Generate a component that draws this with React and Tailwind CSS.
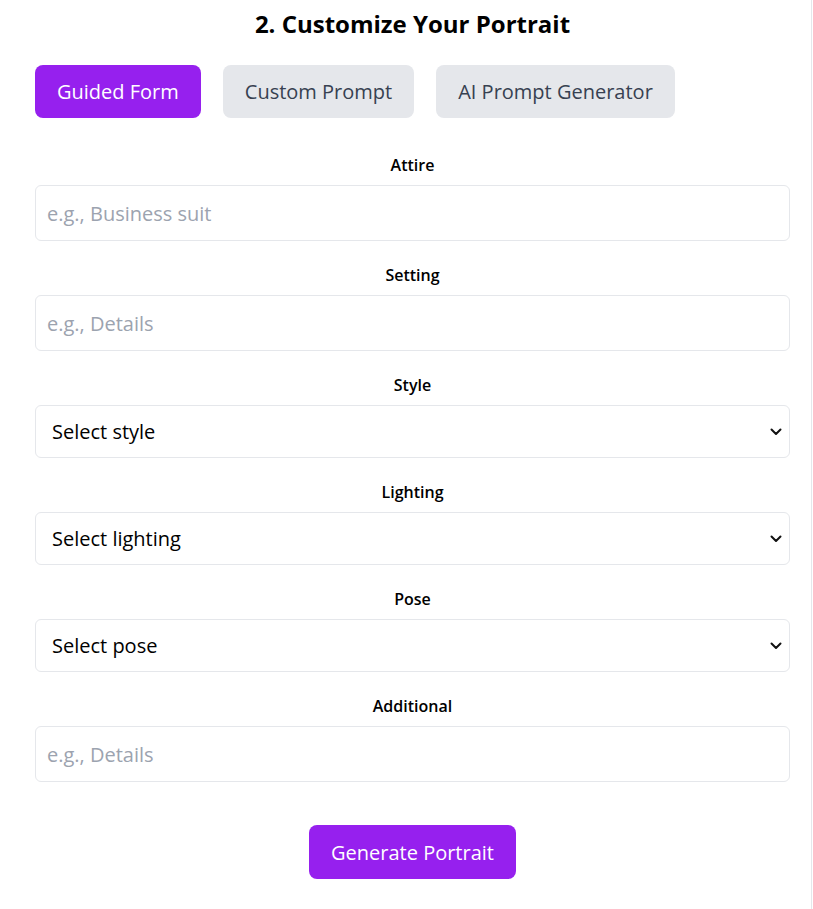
import React, { useState } from "react";

const ChevronDown = () => (
  <svg width="12" height="8" viewBox="0 0 12 8" className="pointer-events-none absolute right-[8px] top-1/2 -translate-y-1/2">
    <path d="M1.5 1.5 L6 6 L10.5 1.5" fill="none" stroke="#111" strokeWidth="2" strokeLinecap="round" strokeLinejoin="round" />
  </svg>
);

const TextField = ({ label, placeholder }) => (
  <div>
    <label className="block text-center text-base leading-6 font-semibold text-black mb-2">{label}</label>
    <input
      type="text"
      placeholder={placeholder}
      className="w-full h-[56px] px-[11px] text-xl bg-white border border-[#e5e7eb] rounded-md placeholder:text-[#9ca3af] focus:outline-none"
    />
  </div>
);

const SelectField = ({ label, placeholder }) => (
  <div>
    <label className="block text-center text-base leading-6 font-semibold text-black mb-2">{label}</label>
    <div className="relative">
      <select className="w-full h-[53px] pl-[16px] text-xl text-black bg-white border border-[#e5e7eb] rounded-md appearance-none focus:outline-none">
        <option>{placeholder}</option>
      </select>
      <ChevronDown />
    </div>
  </div>
);

export default function App() {
  const [tab, setTab] = useState("guided");
  const tabs = [
    { id: "guided", label: "Guided Form" },
    { id: "custom", label: "Custom Prompt" },
    { id: "ai", label: "AI Prompt Generator" },
  ];

  return (
    <div
      className="w-[812px] min-h-[909px] bg-white border-r border-[#e5e7eb] pl-[35px] pr-[21px] pt-[8px]"
      style={{ fontFamily: '"Open Sans", "Noto Sans", sans-serif' }}
    >
      <h2 className="text-center text-2xl leading-8 font-bold text-black mb-[25px]">2. Customize Your Portrait</h2>

      <div className="flex gap-[22px] mb-[35px]">
        {tabs.map((t) => (
          <button
            key={t.id}
            onClick={() => setTab(t.id)}
            className={`h-[53px] px-[22px] rounded-lg text-xl pt-px ${
              tab === t.id ? "bg-[#9620ee] text-white" : "bg-[#e5e7eb] text-[#374151]"
            }`}
          >
            {t.label}
          </button>
        ))}
      </div>

      <div className="flex flex-col gap-[22px]">
        <TextField label="Attire" placeholder="e.g., Business suit" />
        <TextField label="Setting" placeholder="e.g., Details" />
        <SelectField label="Style" placeholder="Select style" />
        <SelectField label="Lighting" placeholder="Select lighting" />
        <SelectField label="Pose" placeholder="Select pose" />
        <TextField label="Additional" placeholder="e.g., Details" />
      </div>

      <div className="flex justify-center mt-[43px]">
        <button className="h-[54px] px-[22px] rounded-lg bg-[#9620ee] text-white text-xl pt-px">Generate Portrait</button>
      </div>
    </div>
  );
}
